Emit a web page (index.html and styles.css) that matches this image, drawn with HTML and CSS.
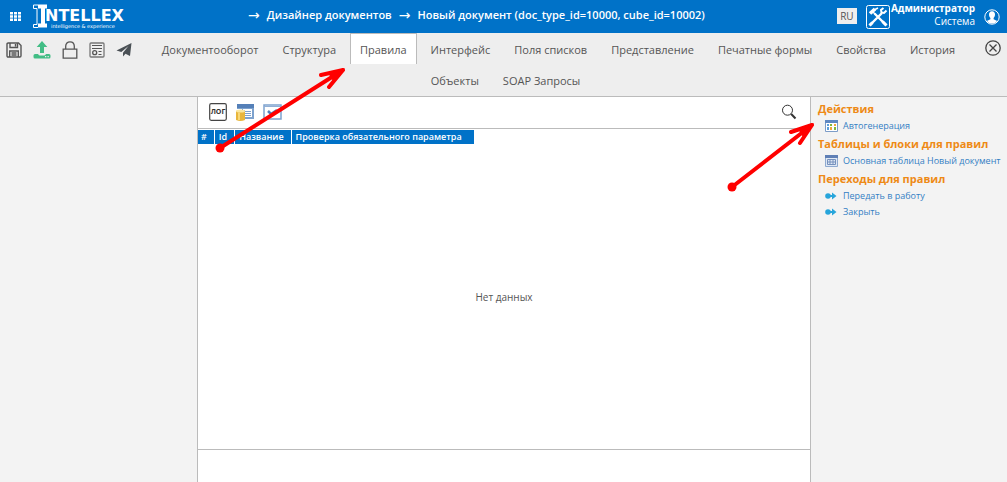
FILE: index.html
```html
<!DOCTYPE html>
<html lang="ru">
<head>
<meta charset="utf-8">
<title>Дизайнер документов</title>
<link rel="stylesheet" href="styles.css">
</head>
<body>
<div class="app">
  <header class="topbar">
    <button class="icon-btn apps" aria-label="Меню">
      <svg width="11" height="9" viewBox="0 0 11 9" fill="#fff"><path d="M0 0h3v2.400H0zM4 0h3v2.400H4zM8 0h3v2.400H8zM0 3.300h3v2.400H0zM4 3.300h3v2.400H4zM8 3.300h3v2.400H8zM0 6.600h3V9H0zM4 6.600h3V9H4zM8 6.600h3V9H8z"/></svg>
    </button>
    <a class="logo" href="#" aria-label="Intellex">
      <svg width="94" height="26" viewBox="0 0 94 26">
        <path fill="none" stroke="#fff" d="M6 1H1.500v3.500H5v16H1.500v3H6"/>
        <path fill="#fff" d="M6 .500h9v4h-2v15h2v4H6v-4h3v-15H6z"/>
        <text class="logo-name" x="13" y="17">NTELLEX</text>
        <text class="logo-sub" x="19" y="24">intelligence &amp; experience</text>
      </svg>
    </a>
    <nav class="crumbs"><span class="arrow">→</span><a href="#">Дизайнер документов</a><span class="arrow">→</span><a href="#">Новый документ (doc_type_id=10000, cube_id=10002)</a></nav>
    <button class="lang">RU</button>
    <button class="icon-btn tools" aria-label="Настройки">
      <svg width="24" height="24" viewBox="0 0 24 24" fill="none" stroke="#fff"><rect x=".5" y=".5" width="23" height="23" rx="2"/><path stroke-width="2.400" d="M4 20 16 8M8.500 8.500 20 20"/><path stroke-width="2" d="M20.500 5.500 18 8l-2.500-.500L15 5l2.500-2"/><path stroke-width="3.600" d="m4 8.500 5-4.500"/><path stroke-width="1.500" d="M9 4.500 12 3M6 6l3 3"/><path stroke-width="3" d="m16.500 16.500 4 4M3.500 20.500l3-3"/></svg>
    </button>
    <div class="user"><b>Администратор</b><span>Система</span></div>
    <button class="icon-btn avatar" aria-label="Профиль">
      <svg width="16" height="16" viewBox="0 0 16 16"><circle cx="8" cy="8" r="7.200" fill="none" stroke="#fff"/><path fill="#fff" d="M8 2.200c2 0 3 1.400 3 3.300 0 1.600-.6 2.700-1.400 3.500v1.300l3.600 1.700A6.500 6.500 0 0 1 8 14.500 6.500 6.500 0 0 1 2.800 12l3.600-1.700V9C5.600 8.200 5 7.100 5 5.500c0-1.900 1-3.300 3-3.300z"/></svg>
    </button>
  </header>

  <div class="menubar">
    <div class="tools-row">
      <button class="icon-btn" aria-label="Сохранить"><svg width="16" height="16" viewBox="0 0 16 16" fill="none" stroke="#555" stroke-width="1.400"><path d="M1 2.200Q1 1 2.200 1h10.300L15 3.500v10.300q0 1.200-1.200 1.200H2.200Q1 15 1 13.800z"/><path d="M4 1v4.500h7.500V1M9.500 2v2.500M3.700 15V9h8.600v6M5.500 11h5M5.500 13h5"/></svg></button>
      <button class="icon-btn" aria-label="Загрузить"><svg width="18" height="18" viewBox="0 0 18 18" fill="#42bd85"><path d="m9 0 5.300 6H11v6H7V6H3.700z"/><path d="M2 13h3q1 1.500 2 1.500h4q1 0 2-1.500h3q1.500 0 1.500 1.500v1.500q0 1.500-1.500 1.500H2Q.5 17.500.5 16v-1.500Q.5 13 2 13z"/><path fill="#eee" d="M12 15h1.300v1.300H12zM14.500 15h1.300v1.300h-1.300z"/></svg></button>
      <button class="icon-btn" aria-label="Заблокировать"><svg width="16" height="18" viewBox="0 0 16 18" fill="none" stroke="#555" stroke-width="1.300"><path d="M1.200 8.200h13.600v9H1.200zM3.700 8V5.300C3.700 2.500 5.500.8 8 .8s4.300 1.700 4.300 4.500V8"/></svg></button>
      <button class="icon-btn" aria-label="Параметры документа"><svg width="16" height="16" viewBox="0 0 16 16" fill="none" stroke="#777" stroke-width="1.300"><rect x="1" y="1" width="14" height="14" rx="1"/><path stroke-width="1" stroke="#555" d="M3 3.500h10M3 6.500h10M9.500 9.500h3M9.500 12.500h3"/><circle cx="5.700" cy="10.700" r="2" stroke="#555"/></svg></button>
      <button class="icon-btn" aria-label="Отправить"><svg width="16" height="14" viewBox="0 0 16 14"><path fill="#4a5055" d="M15.500 0 14 13l-4.500-2.300L7 13.500V9.800L12.500 3 5.300 9 .5 7.500z"/></svg></button>
    </div>
    <nav class="tabs">
      <div class="tab-row"><a href="#">Документооборот</a><a href="#">Структура</a><a class="active" href="#">Правила</a><a href="#">Интерфейс</a><a href="#">Поля списков</a><a href="#">Представление</a><a href="#">Печатные формы</a><a href="#">Свойства</a><a href="#">История</a></div>
      <div class="tab-row tab-row-extra"><a href="#">Объекты</a><a href="#">SOAP Запросы</a></div>
    </nav>
    <button class="icon-btn close" aria-label="Закрыть"><svg width="16" height="16" viewBox="0 0 16 16" fill="none" stroke="#444" stroke-width="1.300"><circle cx="8" cy="8" r="7.200"/><path d="m4.500 4.500 7 7M11.500 4.500l-7 7"/></svg></button>
  </div>

  <div class="workspace">
    <aside class="left"></aside>
    <main class="center">
      <div class="grid-tools">
        <button class="icon-btn" aria-label="Лог"><svg width="18" height="18" viewBox="0 0 18 18"><rect x=".7" y=".7" width="16.600" height="16.600" rx="1.500" fill="#fff" stroke="#444" stroke-width="1.200"/><text class="log-text" x="9" y="11" text-anchor="middle">ЛОГ</text></svg></button>
        <button class="icon-btn" aria-label="Данные"><svg width="18" height="18" viewBox="0 0 18 18"><path fill="#7da2ce" d="M1 1h17v15H6V6H1z"/><path fill="#5580b8" d="M1 1h17v4H1z"/><path fill="#fff" d="M7 6h9v8H9V7H7z"/><path stroke="#7da2ce" d="M9 8.500h6M9 10.500h6M9 12.500h6"/><path fill="#e8b63c" d="M0 8h9v9q-4.500 2-9 0z"/><ellipse cx="4.500" cy="8" rx="4.500" ry="1.500" fill="#fae7a0"/><path fill="#f8d878" d="M2 9.500h2V17H2z"/></svg></button>
        <button class="icon-btn" aria-label="Проверка"><svg width="19" height="16" viewBox="0 0 19 16" fill="none"><rect x="1" y="1" width="17" height="14" fill="#fff" stroke="#7da2ce" stroke-width="1.500"/><path stroke="#91afd5" d="M1 2.500h17"/><path stroke="#5580b8" stroke-width="2.500" d="m5 7 3 3 6-4"/></svg></button>
        <button class="icon-btn search" aria-label="Поиск"><svg width="16" height="16" viewBox="0 0 16 16" fill="none" stroke="#333"><circle cx="6.500" cy="6.200" r="5"/><path stroke-width="2" d="m10.200 10 4.300 4.500"/></svg></button>
      </div>
      <div class="grid">
        <table class="rules">
          <thead><tr><th>#</th><th>Id</th><th>Название</th><th>Проверка обязательного параметра</th></tr></thead>
        </table>
        <p class="empty">Нет данных</p>
      </div>
      <div class="grid-foot"></div>
    </main>
    <aside class="right">
      <h2>Действия</h2>
      <ul>
        <li><svg width="13" height="12" viewBox="0 0 13 12"><path fill="#fff" stroke="#7c9cc8" d="M.5.500h12v11H.5z"/><path fill="#5f88c2" d="M0 0h13v3H0z"/><path fill="#5ea0dc" d="M2 4h2v2H2zM2 7h2v3H2z"/><path fill="#f0a63c" d="M5 7h2v3H5zM9 4h2v2H9z"/><path fill="#7fb83c" d="M5 4h2v2H5zM9 7h2v3H9z"/></svg><a href="#">Автогенерация</a></li>
      </ul>
      <h2>Таблицы и блоки для правил</h2>
      <ul>
        <li><svg width="13" height="12" viewBox="0 0 13 12"><path fill="#dfe8f4" stroke="#8faad0" d="M.5.500h12v11H.5z"/><path fill="#5f7fb5" d="M0 0h13v3H0z"/><path fill="none" stroke="#7691bd" d="M2.500 4.500h8v5h-8zM2 7h8.500M5 4.500v5M8 4.500v5"/></svg><a href="#">Основная таблица Новый документ</a></li>
      </ul>
      <h2>Переходы для правил</h2>
      <ul>
        <li><svg width="13" height="8" viewBox="0 0 13 8"><circle cx="3" cy="4" r="2.800" fill="#27a5db"/><path fill="#27a5db" d="M5 3h2V.500L11.500 4 7 7.500V5H5z"/></svg><a href="#">Передать в работу</a></li>
        <li><svg width="13" height="8" viewBox="0 0 13 8"><circle cx="3" cy="4" r="2.800" fill="#27a5db"/><path fill="#27a5db" d="M5 3h2V.500L11.500 4 7 7.500V5H5z"/></svg><a href="#">Закрыть</a></li>
      </ul>
    </aside>
  </div>
  <svg class="pointers" width="1007" height="482" viewBox="0 0 1007 482" fill="none" stroke="#f00" stroke-width="4" stroke-linecap="round" stroke-linejoin="round" aria-hidden="true">
    <path d="M220 148 343 70M321 75l22-5-14 17"/><path d="M732 187 812 125M791 132l21-7-12 18"/>
    <g fill="#f00" stroke="none"><circle cx="220" cy="148" r="4.500"/><circle cx="732" cy="187" r="4.500"/><path d="m345 68-17 5 5 8zM814 123l-16 6 5 8z"/></g>
  </svg>
</div>
</body>
</html>
```
FILE: styles.css
```css
* { box-sizing: border-box; }
body { margin: 0; font-family: "Open Sans", "Noto Sans", sans-serif; font-size: 11px; color: #555; }
a { color: inherit; text-decoration: none; }
svg { display: block; flex: none; }
button { font: inherit; padding: 0; border: 0; cursor: pointer; }
.icon-btn { background: none; }
.app { position: relative; min-height: 100vh; display: flex; flex-direction: column; }

.topbar { height: 33px; display: flex; align-items: center; padding: 0 7px 0 10px; background: #0072c8; color: #fff; }
.logo { margin: 0 0 0 11px; }
.logo-name { font: 700 16px "DejaVu Sans", sans-serif; fill: #fff; }
.logo-sub { font: 5px "DejaVu Sans", sans-serif; fill: #fff; }
.crumbs { flex: 1; display: flex; justify-content: center; align-items: center; gap: 7px; padding: 0 10px 4px 0; font-size: 11px; font-weight: 600; line-height: 26px; white-space: nowrap; }
.arrow { font-family: "DejaVu Sans", sans-serif; font-size: 14px; font-weight: 400; }
.lang { width: 20px; height: 16px; margin: 0 9px 2px 0; background: #eee; color: #555; font-size: 10px; line-height: 14px; }
.user { display: flex; flex-direction: column; margin: 0 9px 0 1px; padding-bottom: 3px; font-size: 10px; line-height: 13px; text-align: right; }

.menubar { display: flex; align-items: flex-start; padding: 0 6px 1px; background: #eee; border-bottom: 1px solid #bbb; }
.tools-row { display: flex; align-items: center; gap: 11px; height: 33px; }
.tabs { flex: 1; }
.tab-row { display: flex; flex-wrap: wrap; justify-content: center; column-gap: 4px; }
.tab-row-extra { padding-right: 106px; }
.tabs a { height: 31px; padding: 0 9px; border: 1px solid transparent; border-bottom: 0; line-height: 32px; white-space: nowrap; }
.tabs .active { background: #fff; border-color: #bbb; }
.close { margin-top: 7px; }

.workspace { flex: 1; display: flex; background: #f3f3f3; }
.left { flex: none; width: 198px; border-right: 1px solid #bbb; }
.center { flex: 1; display: flex; flex-direction: column; background: #fff; }
.grid-tools { display: flex; align-items: center; gap: 9px; height: 32px; padding: 0 13px 2px 11px; border-bottom: 1px solid #bbb; }
.search { margin-left: auto; }
.log-text { font: 700 7px "Open Sans", sans-serif; fill: #333; }
.grid { flex: 1; display: flex; flex-direction: column; align-items: flex-start; padding-top: 1px; }
.rules { border-collapse: collapse; }
.rules th { padding: 0 7px 0 4px; background: #0072c8; color: #fff; font-size: 9px; font-weight: 600; line-height: 14px; text-align: left; border-left: 1px solid #fff; }
.rules th:first-child { padding-left: 3px; border-left: 0; }
.rules th:last-child { padding-right: 12px; }
.empty { margin: auto; font-size: 10px; line-height: 14px; color: #555; }
.grid-foot { height: 33px; border-top: 1px solid #bbb; }
.right { flex: none; width: 197px; padding: 3px 0 0 7px; border-left: 1px solid #bbb; }
.right h2 { margin: 0; color: #ee8a16; font-size: 11px; font-weight: 700; line-height: 17px; white-space: nowrap; }
.right ul { margin: 0; padding: 1px 0 1px 7px; list-style: none; }
.right li { display: flex; align-items: center; gap: 5px; color: #3380c4; font-size: 9px; line-height: 16px; white-space: nowrap; }
.pointers { position: absolute; left: 0; top: 0; pointer-events: none; }
```
